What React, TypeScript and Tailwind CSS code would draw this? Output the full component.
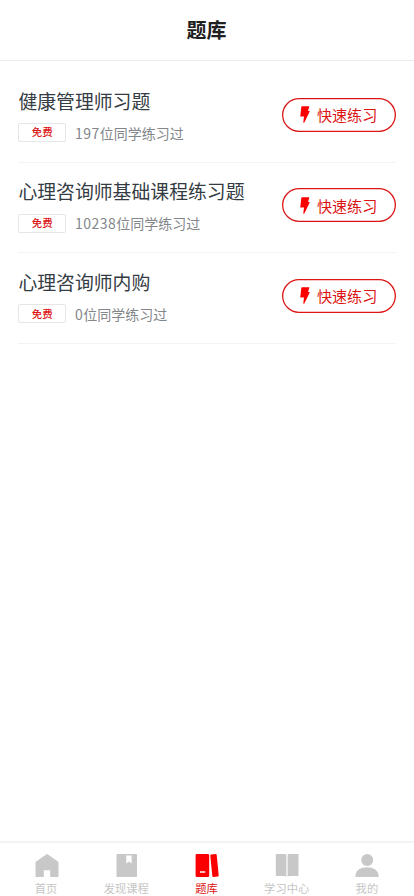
import React from 'react';

type Bank = { title: string; count: number };

const banks: Bank[] = [
  { title: '健康管理师习题', count: 197 },
  { title: '心理咨询师基础课程练习题', count: 10238 },
  { title: '心理咨询师内购', count: 0 },
];

function Bolt() {
  return (
    <svg className="h-[17px] w-[10px] shrink-0" viewBox="0 0 10 17" fill="#fb0000">
      <path d="M2 .2H8.9Q9.5.2 9.3.8L8 5H9.2Q10 5 9.6 5.8L4.5 16.2Q3.5 17.3 3.3 16.2L4 10.6H.8Q.2 10.6.3 10L1.3.9Q1.4.2 2 .2Z" />
    </svg>
  );
}

function BankRow({ title, count }: Bank) {
  return (
    <li className="flex h-[90.6px] justify-between border-b border-[#f3f3f3]">
      <div className="pt-[13.7px]">
        <h2 className="text-[18.85px] leading-[30px] text-[#343b43] whitespace-nowrap">{title}</h2>
        <div className="mt-[7px] flex items-center">
          <span className="flex h-[19px] w-[47.5px] items-center justify-center rounded-[2px] border border-[#e4e6e8] text-[10.4px] leading-none font-medium text-[#dc1414]">
            免费
          </span>
          <span className="ml-[9px] text-[14px] leading-[20px] text-[#83878b] whitespace-nowrap">
            <span className="tracking-[0.5px]">{count}</span>位同学练习过
          </span>
        </div>
      </div>
      <button className="mt-[25.6px] flex h-[34px] w-[114px] items-center justify-center gap-[7px] rounded-full text-[15.1px] leading-none text-[#dc1414] shadow-[inset_0_0_0_1.3px_#dc1414]">
        <Bolt />
        <span>快速练习</span>
      </button>
    </li>
  );
}

const tabs = [
  {
    label: '首页',
    icon: <path d="M12 0Q12.4 0 12.9.4L22.9 7.5Q23.5 8 23.5 8.8V22.2Q23.5 23 22.7 23H15.2V16.2H8.8V23H1.3Q.5 23 .5 22.2V8.8Q.5 8 1.1 7.5L11.1.4Q11.6 0 12 0Z" />,
  },
  {
    label: '发现课程',
    icon: <path fillRule="evenodd" d="M2.4 0H21.1Q22 0 22 .9V22.1Q22 23 21.1 23H2.4Q1.5 23 1.5 22.1V.9Q1.5 0 2.4 0ZM11.3 1.5V9.5L14 7.6L16.6 9.5V1.5Z" />,
  },
  {
    label: '题库',
    active: true,
    icon: (
      <>
        <path fillRule="evenodd" d="M1.8 0H13Q14.2 0 14.2 1.2V21.8Q14.2 23 13 23H1.8Q.6 23 .6 21.8V1.2Q.6 0 1.8 0ZM5 17.2V18.8H10.2V17.2Z" />
        <path d="M16.2.6L20.7.1Q21.6 0 21.7.9L23.7 21.4Q23.8 22.3 22.9 22.4L18.3 22.9Q17.4 23 17.3 22.1L15.3 1.6Q15.2.7 16.2.6Z" />
      </>
    ),
  },
  {
    label: '学习中心',
    icon: (
      <>
        <path d="M.8 0H10Q11.4 0 11.4 1.4V23Q10.8 22 9.5 22H.8Z" />
        <path d="M14 0H23.5V22H14.5Q13.2 22 12.6 23V1.4Q12.6 0 14 0Z" />
      </>
    ),
  },
  {
    label: '我的',
    icon: (
      <>
        <circle cx="12.2" cy="6" r="6" />
        <path d="M.5 23V20.8C1.2 16.2 5.5 13.2 12 13.2S22.8 16.2 23.5 20.8V23Z" />
      </>
    ),
  },
];

export default function App() {
  return (
    <div className="flex h-screen flex-col bg-white font-['Noto_Sans_CJK_SC',sans-serif]">
      <header className="flex h-[61px] items-center justify-center border-b border-[#ececec]">
        <h1 className="pr-px text-[20px] leading-[30px] font-bold text-[#202020]">题库</h1>
      </header>
      <main className="flex-1 px-[18.4px] pt-[11px]">
        <ul>
          {banks.map((b) => (
            <BankRow key={b.title} {...b} />
          ))}
        </ul>
      </main>
      <nav className="flex h-[55px] border-t-2 border-[#f4f4f4] px-[6.5px]">
        {tabs.map((t) => (
          <div
            key={t.label}
            className={`flex flex-1 flex-col items-center pt-[11px] ${t.active ? 'text-[#dc1414]' : 'text-[#c5c5c5]'}`}
          >
            <svg className={`h-[23px] w-6 ${t.active ? 'text-[#fb0000]' : 'text-[#c8c8c8]'}`} viewBox="0 0 24 23" fill="currentColor">
              {t.icon}
            </svg>
            <span className="mt-[3px] pr-px text-[11.3px] leading-[16px]">{t.label}</span>
          </div>
        ))}
      </nav>
    </div>
  );
}
